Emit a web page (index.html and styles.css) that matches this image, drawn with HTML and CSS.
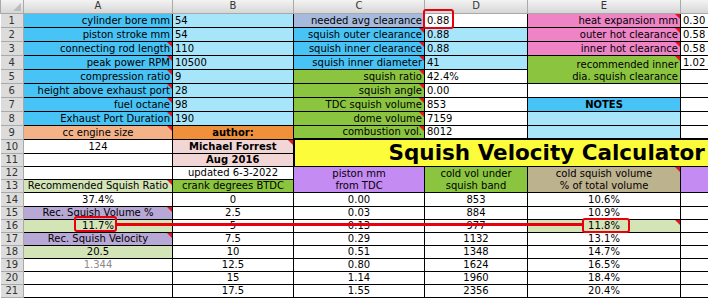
FILE: index.html
```html
<!DOCTYPE html>
<html>
<head>
<meta charset="utf-8">
<link rel="stylesheet" href="styles.css">
</head>
<body>
<div class="sheet">
<table class="grid">
<colgroup>
<col class="c-rn"><col class="c-a"><col class="c-b"><col class="c-c"><col class="c-d"><col class="c-e"><col class="c-f">
</colgroup>
<tr class="hdr"><th class="corner"></th><th>A</th><th>B</th><th>C</th><th>D</th><th>E</th><th></th></tr>
<tr class="r14"><th class="rn">1</th><td class="blue r">cylinder bore mm</td><td class="lblue">54</td><td class="cblue r">needed avg clearance</td><td class="white">0.88</td><td class="pink r cm">heat expansion mm</td><td class="white">0.30</td></tr>
<tr class="r14"><th class="rn">2</th><td class="blue r">piston stroke mm</td><td class="lblue">54</td><td class="blue r cm">squish outer clearance</td><td class="lblue">0.88</td><td class="pink r cm">outer hot clearance</td><td class="white">0.58</td></tr>
<tr class="r14"><th class="rn">3</th><td class="blue r cm">connecting rod length</td><td class="lblue">110</td><td class="blue r cm">squish inner clearance</td><td class="lblue">0.88</td><td class="pink r cm">inner hot clearance</td><td class="white">0.58</td></tr>
<tr class="r14"><th class="rn">4</th><td class="blue r cm">peak power RPM</td><td class="lblue">10500</td><td class="blue r cm">squish inner diameter</td><td class="lblue">41</td><td class="green r cm two" rowspan="2">recommended inner<br>dia. squish clearance</td><td class="white">1.02</td></tr>
<tr class="r14"><th class="rn">5</th><td class="blue r cm">compression ratio</td><td class="lblue">9</td><td class="green r cm">squish ratio</td><td class="white">42.4%</td><td class="white"></td></tr>
<tr class="r14"><th class="rn">6</th><td class="blue r cm">height above exhaust port</td><td class="lblue">28</td><td class="green r cm">squish angle</td><td class="white">0.00</td><td class="white"></td><td class="white"></td></tr>
<tr class="r14"><th class="rn">7</th><td class="blue r cm">fuel octane</td><td class="lblue">98</td><td class="green r cm">TDC squish volume</td><td class="white">853</td><td class="blue c b">NOTES</td><td class="white"></td></tr>
<tr class="r14"><th class="rn">8</th><td class="blue r cm">Exhaust Port Duration</td><td class="lblue">190</td><td class="green r cm">dome volume</td><td class="white">7159</td><td class="lblue"></td><td class="white"></td></tr>
<tr class="r14"><th class="rn">9</th><td class="peach c cm">cc engine size</td><td class="orange c b">author:</td><td class="green r cm">combustion vol.</td><td class="white">8012</td><td class="lblue"></td><td class="white"></td></tr>
<tr class="r14 tt"><th class="rn">10</th><td class="white c">124</td><td class="lpink c b cm">Michael Forrest</td><td class="title" colspan="4" rowspan="2">Squish Velocity Calculator</td></tr>
<tr class="r13"><th class="rn">11</th><td class="white"></td><td class="lpink c b">Aug 2016</td></tr>
<tr class="r13"><th class="rn">12</th><td class="white"></td><td class="white c">updated 6-3-2022</td><td class="purple c two13" rowspan="2">piston mm<br>from TDC</td><td class="green c two13" rowspan="2">cold vol under<br>squish band</td><td class="khaki c two13 cm" rowspan="2">cold squish volume<br>% of total volume</td><td class="purple" rowspan="2"></td></tr>
<tr class="r13"><th class="rn">13</th><td class="lgreen c cm">Recommended Squish Ratio</td><td class="green c">crank degrees BTDC</td></tr>
<tr class="r14"><th class="rn">14</th><td class="white c">37.4%</td><td class="white c">0</td><td class="white c">0.00</td><td class="white c">853</td><td class="white c">10.6%</td><td class="white"></td></tr>
<tr class="r13"><th class="rn">15</th><td class="lav c cm">Rec. Squish Volume %</td><td class="white c">2.5</td><td class="white c">0.03</td><td class="white c">884</td><td class="white c">10.9%</td><td class="white"></td></tr>
<tr class="r13"><th class="rn">16</th><td class="lgreen c">11.7%</td><td class="white c">5</td><td class="white c">0.13</td><td class="white c">977</td><td class="lgreen c cm">11.8%</td><td class="white"></td></tr>
<tr class="r13"><th class="rn">17</th><td class="lav c cm">Rec. Squish Velocity</td><td class="white c">7.5</td><td class="white c">0.29</td><td class="white c">1132</td><td class="white c">13.1%</td><td class="white"></td></tr>
<tr class="r13"><th class="rn">18</th><td class="lgreen c">20.5</td><td class="white c">10</td><td class="white c">0.51</td><td class="white c">1348</td><td class="white c">14.7%</td><td class="white"></td></tr>
<tr class="r13"><th class="rn">19</th><td class="white c grey">1.344</td><td class="white c">12.5</td><td class="white c">0.80</td><td class="white c">1624</td><td class="white c">16.5%</td><td class="white"></td></tr>
<tr class="r13"><th class="rn">20</th><td class="white"></td><td class="white c">15</td><td class="white c">1.14</td><td class="white c">1960</td><td class="white c">18.4%</td><td class="white"></td></tr>
<tr class="r13"><th class="rn">21</th><td class="white"></td><td class="white c">17.5</td><td class="white c">1.55</td><td class="white c">2356</td><td class="white c">20.4%</td><td class="white"></td></tr>
</table>
<div class="mark mark-d1"></div>
<div class="mark mark-a16"></div>
<div class="mark mark-e16"></div>
<div class="link-line"></div>
</div>
</body>
</html>
```
FILE: styles.css
```css
html, body {
  margin: 0;
  padding: 0;
  background: #ffffff;
  overflow: hidden;
}
.sheet {
  position: relative;
  width: 708px;
  height: 298px;
  overflow: hidden;
  font-family: "DejaVu Sans", Verdana, sans-serif;
  font-size: 10px;
  color: #000;
}
.grid {
  border-collapse: collapse;
  table-layout: fixed;
  width: 720px;
}
.c-rn { width: 23px; }
.c-a { width: 149px; }
.c-b { width: 121px; }
.c-c { width: 131px; }
.c-d { width: 103px; }
.c-e { width: 153px; }
.c-f { width: 40px; }

.grid td, .grid th {
  padding: 0 2px 0 2px;
  border: 1px solid #000;
  white-space: nowrap;
  overflow: hidden;
  line-height: 12px;
  vertical-align: bottom;
  text-align: left;
  font-weight: normal;
  position: relative;
}
.hdr { height: 13px; }
.hdr th {
  background: linear-gradient(#f3f3f3, #d6d6d6);
  border: 1px solid #a9a9a9;
  border-top: none;
  text-align: center;
  color: #333;
  font-size: 10px;
  line-height: 12px;
  vertical-align: middle;
}
.hdr th.corner::after {
  content: "";
  position: absolute;
  right: 2px;
  bottom: 2px;
  border-left: 8px solid transparent;
  border-bottom: 8px solid #bcbcbc;
}
.grid th.rn {
  background: #dcdcdc;
  border: 1px solid #a9a9a9;
  border-left: none;
  text-align: center;
  color: #333;
  padding: 0;
}
.r14 { height: 14px; }
.r13 { height: 13px; }

.r { text-align: right !important; }
.c { text-align: center !important; }
.b { font-weight: bold !important; }
.grey { color: #8a8a8a; }

.blue { background: #48c3f6; }
.lblue { background: #a7e5fb; }
.cblue { background: #a6bade; }
.pink { background: #ee84c6; }
.green { background: #8bc53f; }
.white { background: #ffffff; }
.peach { background: #f4b288; }
.orange { background: #f0903a; }
.lpink { background: #f2d5d5; }
.purple { background: #c48bf2; }
.khaki { background: #bdb28e; }
.lgreen { background: #d3e4b7; }
.lav { background: #b8a8d6; }

.two { line-height: 14px; vertical-align: top; }
.two13 { line-height: 13px; vertical-align: middle; }

.grid td.title {
  background: #fdfc3b;
  border-top: 2px solid #000;
  border-left: 2px solid #000;
  font-weight: bold;
  font-size: 21.5px;
  line-height: 24px;
  padding-left: 94px;
  vertical-align: middle;
}

.cm::after {
  content: "";
  position: absolute;
  top: 0;
  right: 0;
  border-left: 5px solid transparent;
  border-top: 5px solid #e0141e;
}

.mark {
  position: absolute;
  border: 2px solid #e8000c;
  border-radius: 3px;
  box-sizing: border-box;
}
.mark-d1 { left: 423px; top: 9px; width: 31px; height: 20px; }
.mark-a16 { left: 74px; top: 216px; width: 43px; height: 16px; }
.mark-e16 { left: 582px; top: 218px; width: 48px; height: 15px; }
.link-line {
  position: absolute;
  left: 116px;
  top: 223px;
  width: 467px;
  height: 3px;
  background: #e8000c;
}
```
